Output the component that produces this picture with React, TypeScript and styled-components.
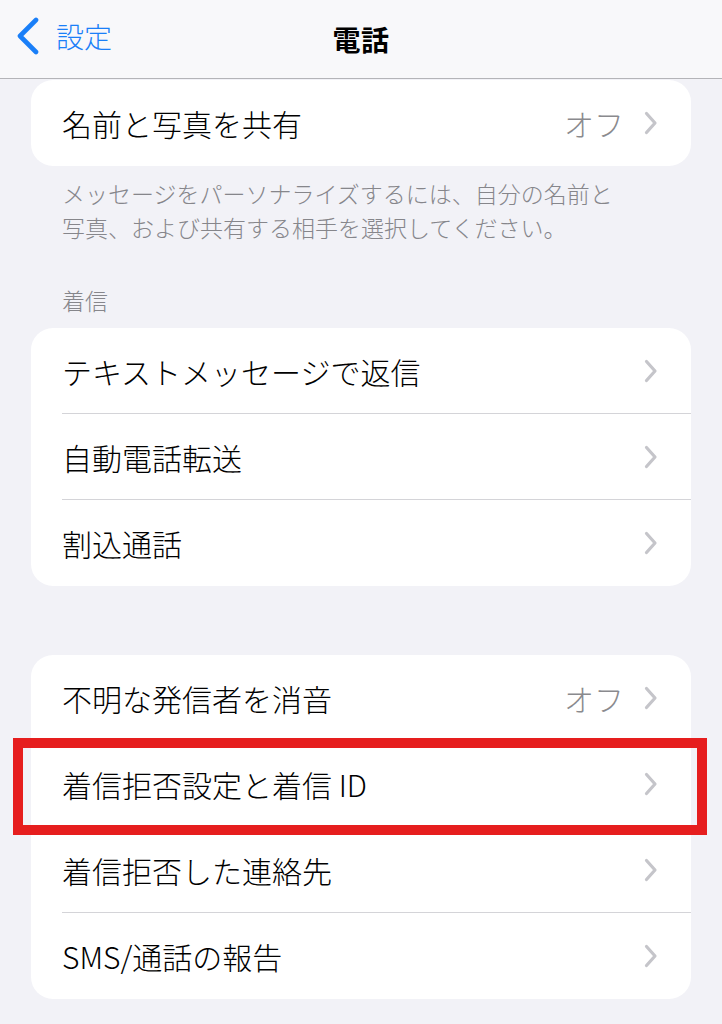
import styled, { createGlobalStyle } from 'styled-components';

const GlobalStyle = createGlobalStyle`
  html, body {
    margin: 0;
    padding: 0;
    background: #f2f2f7;
    font-family: "Noto Sans CJK JP", "Noto Sans", sans-serif;
    -webkit-font-smoothing: antialiased;
  }
`;

const StyledHeader = styled.header`
  position: relative;
  display: flex;
  align-items: center;
  justify-content: center;
  height: 78px;
  background: #f8f8fa;
  border-bottom: 1px solid #b4b4b8;
`;

const BackButton = styled.a`
  position: absolute;
  left: 16px;
  top: 16px;
  display: flex;
  align-items: center;
  gap: 16px;
  color: #1a7ff8;
  font-size: 28px;
  font-weight: 300;
  line-height: 40px;
  text-decoration: none;
`;

const Title = styled.h1`
  margin: 0;
  font-size: 28px;
  font-weight: 700;
  color: #000;
  letter-spacing: 0.5px;
`;

const Content = styled.main`
  padding: 1px 31px 24px 31px;
`;

const Card = styled.section<{ $top?: number }>`
  margin-top: ${({ $top }) => $top ?? 0}px;
  background: #fff;
  border-radius: 22px;
`;

const Row = styled.div`
  position: relative;
  display: flex;
  align-items: center;
  height: 86px;
  padding-left: 31px;
`;

const RowInner = styled.div<{ $last?: boolean }>`
  display: flex;
  align-items: center;
  flex: 1;
  height: 100%;
  padding-right: 33px;
  box-sizing: border-box;
  border-bottom: ${({ $last }) => ($last ? 'none' : '1px solid #d4d4d8')};
`;

const Label = styled.span`
  flex: 1;
  font-size: 30px;
  font-weight: 300;
  color: #000;
  white-space: nowrap;
`;

const Value = styled.span`
  font-size: 30px;
  font-weight: 300;
  color: #8a8a8e;
  margin-right: 20px;
`;

const Footer = styled.p`
  margin: 0;
  padding: 10px 31px 0;
  font-size: 23px;
  font-weight: 300;
  line-height: 34px;
  color: #86868b;
`;

const SectionTitle = styled.h2`
  margin: 39px 0 11px;
  padding: 0 31px;
  font-size: 23px;
  line-height: 34px;
  font-weight: 300;
  color: #86868b;
`;

const Highlight = styled.div`
  position: absolute;
  left: -18px;
  right: -16px;
  top: -3px;
  bottom: -8px;
  border: 10px solid #e61e1e;
  pointer-events: none;
`;

const Chevron = () => (
  <svg width="14" height="24" viewBox="0 0 14 24" fill="none">
    <path d="M2.5 2.5 L11 12 L2.5 21.5" stroke="#c5c5ca" strokeWidth="3.2" strokeLinecap="round" strokeLinejoin="round" />
  </svg>
);

const BackChevron = () => (
  <svg width="24" height="38" viewBox="0 0 24 38" fill="none">
    <path d="M20 3 L4 19 L20 35" stroke="#1a7ff8" strokeWidth="4.6" strokeLinecap="round" strokeLinejoin="round" />
  </svg>
);

type Item = { label: string; value?: string; highlight?: boolean };

const incoming: Item[] = [
  { label: 'テキストメッセージで返信' },
  { label: '自動電話転送' },
  { label: '割込通話' },
];

const blocking: Item[] = [
  { label: '不明な発信者を消音', value: 'オフ' },
  { label: '着信拒否設定と着信 ID', highlight: true },
  { label: '着信拒否した連絡先' },
  { label: 'SMS/通話の報告' },
];

function SettingsGroup({ items, top }: { items: Item[]; top?: number }) {
  return (
    <Card $top={top}>
      {items.map((item, index) => (
        <Row key={index}>
          <RowInner $last={index === items.length - 1}>
            <Label>{item.label}</Label>
            {item.value && <Value>{item.value}</Value>}
            <Chevron />
          </RowInner>
          {item.highlight && <Highlight />}
        </Row>
      ))}
    </Card>
  );
}

export default function App() {
  return (
    <>
      <GlobalStyle />
      <StyledHeader>
        <BackButton href='#'>
          <BackChevron />
          <span>設定</span>
        </BackButton>
        <Title>電話</Title>
      </StyledHeader>
      <Content>
        <SettingsGroup items={[{ label: '名前と写真を共有', value: 'オフ' }]} />
        <Footer>
          メッセージをパーソナライズするには、自分の名前と
          <br />
          写真、および共有する相手を選択してください。
        </Footer>
        <SectionTitle>着信</SectionTitle>
        <SettingsGroup items={incoming} />
        <SettingsGroup items={blocking} top={69} />
      </Content>
    </>
  );
}
